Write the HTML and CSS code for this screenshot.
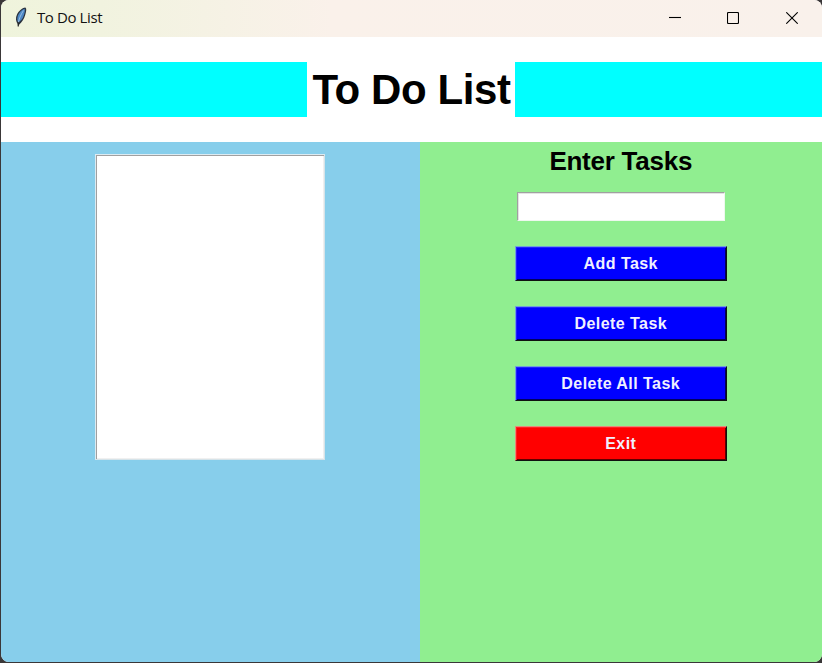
FILE: index.html
```html
<!DOCTYPE html>
<html lang="en">
<head>
<meta charset="utf-8">
<title>To Do List</title>
<link rel="stylesheet" href="styles.css">
</head>
<body>
<div class="window">
  <header class="titlebar">
    <svg class="feather" width="14" height="20" viewBox="0 0 14 20">
      <path d="M4 19.500 3.800 17C1.800 14.500 1.300 11 3 7.500 4.500 4 8 1 11.300.4c1.500.8 1 4-.1 7.600-1 4-3.200 7-5.900 9.500z" fill="#2b3440"/>
      <path d="M4.200 15.500C2.800 13 3 9.500 5 6.500 6.500 4 8.500 2.300 10.500 1.700c.8 1.300.2 4-.6 6.300-1 3.500-2.900 5.800-5.700 7.500z" fill="#4b87c6"/>
      <path d="M4.300 16C5 12 6.500 8 9.500 3.500" fill="none" stroke="#a9cbea" stroke-width=".8"/>
      <path d="M4.200 19.500V15" stroke="#222" stroke-width="1.100"/>
    </svg>
    <span class="caption">To Do List</span>
    <div class="controls">
      <svg width="12" height="12" viewBox="0 0 12 12"><path d="M0 5.500H12"/></svg>
      <svg width="12" height="12" viewBox="0 0 12 12"><rect x=".5" y=".5" width="11" height="11" rx="1"/></svg>
      <svg width="12" height="12" viewBox="0 0 12 12"><path d="M.3.3 11.700 11.700M11.700.3.3 11.700"/></svg>
    </div>
  </header>
  <div class="banner"><h1>To Do List</h1></div>
  <main class="panes">
    <section class="tasks"><div class="listbox"></div></section>
    <section class="form">
      <h2>Enter Tasks</h2>
      <input class="entry" type="text" aria-label="Enter Tasks">
      <button>Add Task</button>
      <button>Delete Task</button>
      <button>Delete All Task</button>
      <button class="exit">Exit</button>
    </section>
  </main>
</div>
</body>
</html>
```
FILE: styles.css
```css
* { box-sizing: border-box; }
body {
  margin: 0;
  height: 663px;
  padding: 0 0 1px 1px;
  overflow: hidden;
  background: #3a3738;
  font-family: "Liberation Sans", Arial, sans-serif;
}
.window {
  height: 662px;
  display: flex;
  flex-direction: column;
  overflow: hidden;
  border-radius: 8px;
  background: #fff;
}
.titlebar {
  height: 37px;
  flex: none;
  display: flex;
  align-items: center;
  padding: 0 24px 0 13px;
  background: linear-gradient(90deg, #eff4dc 0, #f1f3df 100px, #faf1ea 330px, #f9f1eb 100%);
}
.feather { margin: -4px 9px 0 0; }
.caption {
  font: 15px/20px "Open Sans", "Noto Sans", sans-serif;
  letter-spacing: -0.4px;
  color: #111;
  margin-top: -4px;
}
.controls { margin: -1px 0 0 auto; display: grid; grid-template-columns: 58px 59px 12px; }
.controls svg { fill: none; stroke: #000; stroke-width: 1.1; display: block; }
.banner {
  flex: none;
  height: 55px;
  margin: 25px 0;
  padding-right: 1px;
  display: flex;
  justify-content: center;
  background: #0ff;
}
h1 {
  margin: 0;
  width: 208px;
  height: 55px;
  padding-left: 1px;
  font-size: 42px;
  letter-spacing: -0.4px;
  line-height: 56px;
  text-align: center;
  white-space: nowrap;
  background: #fff;
}
.panes { flex: 1; display: flex; }
.tasks { width: 418.500px; background: #87ceeb; padding: 12px 0 0 94px; }
.listbox {
  width: 230px;
  height: 306px;
  background: #fff;
  border: 1px solid;
  border-color: #dcebf2 #d5e3e9 #d5e3e9 #dcebf2;
  box-shadow: inset 1px 1px #a0a0a0, inset -1px -1px #f0f0f0;
}
.form {
  flex: 1;
  display: flex;
  flex-direction: column;
  align-items: center;
  background: #90ee90;
}
h2 { margin: 4px 0 0; font-size: 26px; line-height: 30px; letter-spacing: -0.25px; }
.entry {
  width: 208px;
  height: 29px;
  margin: 16px 0 0;
  border: 1px solid;
  border-color: #a0a0a0 #eef8ee #eef8ee #a0a0a0;
  box-shadow: inset 1px 1px #e3e3e3;
  background: #fff;
  outline: none;
}
button {
  width: 212px;
  height: 35px;
  margin: 25px 0 0;
  padding: 0;
  border: 1px solid;
  border-color: #6f9fdc #111 #111 #6f9fdc;
  box-shadow: inset 1px 1px #2020ff, inset -1px -1px #000060;
  background: #00f;
  color: #f0f0ff;
  font: bold 16px/33px "Liberation Sans", Arial, sans-serif;
  letter-spacing: 0.45px;
}
.exit {
  background: #f00;
  border-color: #e88a78 #111 #111 #e88a78;
  box-shadow: inset 1px 1px #ff2020, inset -1px -1px #600000;
}
```
